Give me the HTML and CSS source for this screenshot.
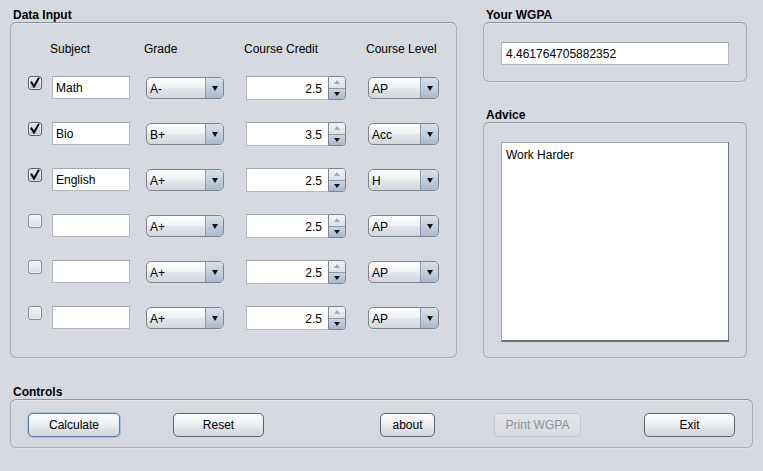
FILE: index.html
```html
<!DOCTYPE html>
<html>
<head>
<meta charset="utf-8">
<title>WGPA</title>
<link rel="stylesheet" href="styles.css">
</head>
<body>
<div class="app">
  <div class="top">
    <section class="group">
      <div class="group-title">Data Input</div>
      <div class="group-box data-box">
        <div class="grid">
          <div></div>
          <div class="hdr">Subject</div>
          <div class="hdr">Grade</div>
          <div class="hdr">Course Credit</div>
          <div class="hdr">Course Level</div>

          <div class="check on"><svg viewBox="0 0 14 14" width="14" height="14"><polyline points="3.5,6.5 6,10.5 10.5,2.5" /></svg></div>
          <div class="field">Math</div>
          <div class="combo"><span class="combo-text">A-</span><span class="combo-btn"><i class="down"></i></span></div>
          <div class="spinner"><span class="spin-text">2.5</span><span class="spin-btns"><span class="spin-up"><i class="up"></i></span><span class="spin-down"><i class="down"></i></span></span></div>
          <div class="combo level"><span class="combo-text">AP</span><span class="combo-btn"><i class="down"></i></span></div>

          <div class="check on"><svg viewBox="0 0 14 14" width="14" height="14"><polyline points="3.5,6.5 6,10.5 10.5,2.5" /></svg></div>
          <div class="field">Bio</div>
          <div class="combo"><span class="combo-text">B+</span><span class="combo-btn"><i class="down"></i></span></div>
          <div class="spinner"><span class="spin-text">3.5</span><span class="spin-btns"><span class="spin-up"><i class="up"></i></span><span class="spin-down"><i class="down"></i></span></span></div>
          <div class="combo level"><span class="combo-text">Acc</span><span class="combo-btn"><i class="down"></i></span></div>

          <div class="check on"><svg viewBox="0 0 14 14" width="14" height="14"><polyline points="3.5,6.5 6,10.5 10.5,2.5" /></svg></div>
          <div class="field">English</div>
          <div class="combo"><span class="combo-text">A+</span><span class="combo-btn"><i class="down"></i></span></div>
          <div class="spinner"><span class="spin-text">2.5</span><span class="spin-btns"><span class="spin-up"><i class="up"></i></span><span class="spin-down"><i class="down"></i></span></span></div>
          <div class="combo level"><span class="combo-text">H</span><span class="combo-btn"><i class="down"></i></span></div>

          <div class="check"></div>
          <div class="field"></div>
          <div class="combo"><span class="combo-text">A+</span><span class="combo-btn"><i class="down"></i></span></div>
          <div class="spinner"><span class="spin-text">2.5</span><span class="spin-btns"><span class="spin-up"><i class="up"></i></span><span class="spin-down"><i class="down"></i></span></span></div>
          <div class="combo level"><span class="combo-text">AP</span><span class="combo-btn"><i class="down"></i></span></div>

          <div class="check"></div>
          <div class="field"></div>
          <div class="combo"><span class="combo-text">A+</span><span class="combo-btn"><i class="down"></i></span></div>
          <div class="spinner"><span class="spin-text">2.5</span><span class="spin-btns"><span class="spin-up"><i class="up"></i></span><span class="spin-down"><i class="down"></i></span></span></div>
          <div class="combo level"><span class="combo-text">AP</span><span class="combo-btn"><i class="down"></i></span></div>

          <div class="check"></div>
          <div class="field"></div>
          <div class="combo"><span class="combo-text">A+</span><span class="combo-btn"><i class="down"></i></span></div>
          <div class="spinner"><span class="spin-text">2.5</span><span class="spin-btns"><span class="spin-up"><i class="up"></i></span><span class="spin-down"><i class="down"></i></span></span></div>
          <div class="combo level"><span class="combo-text">AP</span><span class="combo-btn"><i class="down"></i></span></div>
        </div>
      </div>
    </section>

    <div class="side">
      <section class="group">
        <div class="group-title">Your WGPA</div>
        <div class="group-box wgpa-box">
          <div class="field wide">4.461764705882352</div>
        </div>
      </section>
      <section class="group advice">
        <div class="group-title">Advice</div>
        <div class="group-box advice-box">
          <div class="textarea">Work Harder</div>
        </div>
      </section>
    </div>
  </div>

  <section class="group controls">
    <div class="group-title">Controls</div>
    <div class="group-box controls-box">
      <button class="btn focus">Calculate</button>
      <button class="btn b-reset">Reset</button>
      <button class="btn b-about">about</button>
      <button class="btn b-print" disabled>Print WGPA</button>
      <button class="btn b-exit">Exit</button>
    </div>
  </section>
</div>
</body>
</html>
```

FILE: styles.css
```css
html, body {
  margin: 0;
  padding: 0;
  background: #d6d9df;
}
body {
  font-family: "Liberation Sans", Arial, sans-serif;
  font-size: 12px;
  color: #000;
  width: 763px;
  height: 471px;
  overflow: hidden;
}
.app {
  padding: 8px 0 0 10px;
}
.top {
  display: flex;
  gap: 26px;
  align-items: flex-start;
}
.group-title {
  font-weight: bold;
  line-height: 14px;
  height: 14px;
  padding-left: 3px;
}
.group-box {
  box-sizing: border-box;
  border: 1px solid #a9adb4;
  border-top-color: #8f949c;
  border-radius: 6px;
  box-shadow: inset 0 1px 1px rgba(255,255,255,0.35), 0 1px 0 rgba(255,255,255,0.25);
}
.data-box {
  width: 447px;
  height: 336px;
  padding: 18px 0 0 17px;
}
.grid {
  display: grid;
  grid-template-columns: 24px 94px 100px 122px 71px;
  grid-template-rows: 13px repeat(6, 24px);
  row-gap: 22px;
  align-items: start;
}
.hdr {
  line-height: 14px;
  padding-top: 1px;
  margin-left: -2px;
  white-space: nowrap;
}
.check {
  box-sizing: border-box;
  width: 14px;
  height: 14px;
  border: 1px solid #858c96;
  border-radius: 3px;
  background: linear-gradient(#f4f5f7, #d9dde3);
  box-shadow: inset 0 0 0 1px rgba(255,255,255,0.6);
  position: relative;
}
.check.on {
  border-color: #59626e;
  background: linear-gradient(#e3e8ee, #b9c4d1);
}
.check svg {
  position: absolute;
  left: -1px;
  top: -1px;
}
.check polyline {
  fill: none;
  stroke: #000;
  stroke-width: 2;
  stroke-linecap: square;
}
.field {
  box-sizing: border-box;
  width: 78px;
  height: 23px;
  background: #fff;
  border: 1px solid #b3b7bd;
  border-top-color: #a2a6ad;
  padding: 1px 3px 0;
  line-height: 21px;
  white-space: nowrap;
  overflow: hidden;
}
.field.wide {
  width: 228px;
  padding-left: 4px;
}
.combo {
  box-sizing: border-box;
  width: 78px;
  height: 22px;
  margin-top: 1px;
  display: flex;
  border: 1px solid #7d848e;
  border-radius: 5px;
  overflow: hidden;
  background: linear-gradient(#fdfdfe 0%, #f1f3f5 45%, #e2e5ea 55%, #d3d7dd 100%);
}
.combo.level {
  width: 71px;
}
.combo-text {
  flex: 1;
  padding: 1px 0 0 3px;
  line-height: 20px;
}
.combo-btn {
  width: 17px;
  border-left: 1px solid #8d98a6;
  background: linear-gradient(#d9e1ea 0%, #c3cfdc 50%, #a9b9cc 100%);
  display: flex;
  align-items: center;
  justify-content: center;
}
i.down, i.up {
  display: block;
  width: 0;
  height: 0;
  border-left: 3px solid transparent;
  border-right: 3px solid transparent;
}
i.down {
  border-top: 5px solid #111;
}
i.up {
  border-bottom: 4px solid #a5aab1;
}
.spinner {
  width: 100px;
  height: 24px;
  display: flex;
}
.spin-text {
  box-sizing: border-box;
  flex: 1;
  background: #fff;
  border: 1px solid #b3b7bd;
  border-top-color: #a2a6ad;
  border-right: none;
  text-align: right;
  padding: 1px 6px 0 0;
  line-height: 22px;
}
.spin-btns {
  box-sizing: border-box;
  width: 18px;
  display: flex;
  flex-direction: column;
  border: 1px solid #7d848e;
  border-radius: 0 4px 4px 0;
  overflow: hidden;
}
.spin-up, .spin-down {
  flex: 1;
  display: flex;
  align-items: center;
  justify-content: center;
}
.spin-up {
  background: linear-gradient(#f1f3f6, #dde2e8);
  border-bottom: 1px solid #8d96a2;
}
.spin-down {
  background: linear-gradient(#cdd7e2, #a8b8cc);
}
.spin-down i.down {
  border-top-width: 4px;
}
.side {
  width: 264px;
}
.wgpa-box {
  width: 264px;
  height: 60px;
  padding: 19px 0 0 17px;
}
.advice {
  margin-top: 26px;
}
.advice-box {
  width: 264px;
  height: 236px;
  padding: 19px 0 0 17px;
}
.textarea {
  box-sizing: border-box;
  width: 228px;
  height: 200px;
  background: #fff;
  border: 1px solid #a2a6ad;
  border-right-color: #70747b;
  border-bottom: 2px solid #6d7178;
  padding: 5px 4px;
  line-height: 14px;
}
.controls {
  margin-top: 27px;
}
.controls-box {
  width: 743px;
  height: 49px;
  padding: 13px 0 0 17px;
  display: flex;
  align-items: flex-start;
}
.btn {
  box-sizing: border-box;
  height: 24px;
  width: 91px;
  margin: 0;
  padding: 0;
  font: 12px "Liberation Sans", Arial, sans-serif;
  line-height: 22px;
  color: #000;
  border: 1px solid #5e636b;
  border-radius: 5px;
  background: linear-gradient(#fbfbfc 0%, #f1f2f4 40%, #e3e6ea 60%, #d0d4da 100%);
  box-shadow: inset 0 1px 0 #fff;
}
.btn.focus {
  width: 92px;
  border-color: #5d7aa3;
  box-shadow: 0 0 0 1px #a8bedd, inset 0 1px 0 #fff;
}
.b-reset { margin-left: 53px; }
.b-about { margin-left: 116px; width: 55px; }
.b-print {
  margin-left: 59px;
  width: 87px;
  color: #8e9298;
  border-color: #c4c8ce;
  background: linear-gradient(#e1e4e8, #d8dbe0);
  box-shadow: none;
}
.b-exit { margin-left: 63px; }
```
